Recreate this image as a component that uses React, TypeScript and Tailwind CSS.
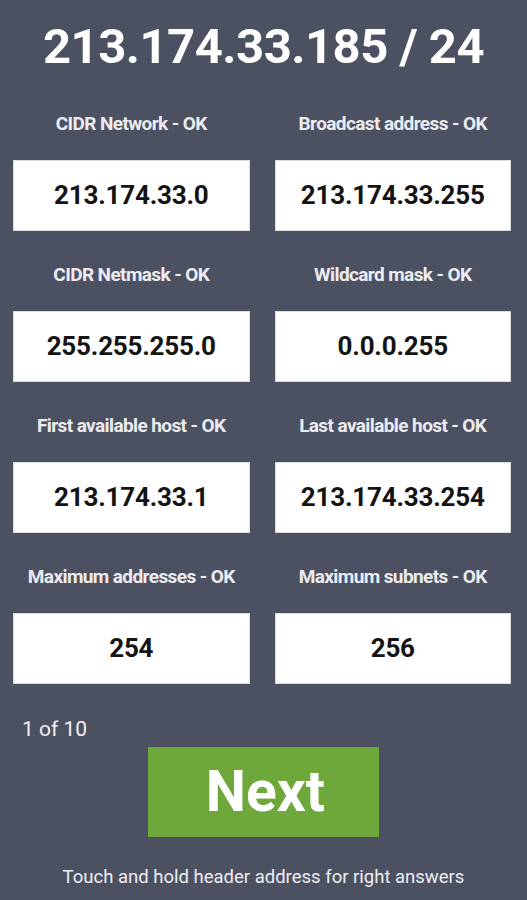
import React from "react";

const cells: [string, string][] = [
  ["CIDR Network - OK", "213.174.33.0"],
  ["Broadcast address - OK", "213.174.33.255"],
  ["CIDR Netmask - OK", "255.255.255.0"],
  ["Wildcard mask - OK", "0.0.0.255"],
  ["First available host - OK", "213.174.33.1"],
  ["Last available host - OK", "213.174.33.254"],
  ["Maximum addresses - OK", "254"],
  ["Maximum subnets - OK", "256"],
];

export default function App() {
  return (
    <div
      className="w-[527px] h-[900px] bg-[#4c5162] flex flex-col overflow-hidden"
      style={{ fontFamily: "Roboto, 'Liberation Sans', sans-serif" }}
    >
      <h1 className="mt-[19px] h-[56px] leading-[56px] text-center text-white text-[49px] font-bold tracking-[-0.5px]">
        213.174.33.185 / 24
      </h1>
      <div className="mt-[37px] pl-[13px] pr-[16px] grid grid-cols-2 gap-x-[25px] gap-y-[32px]">
        {cells.map(([label, value]) => (
          <div key={label} className="flex flex-col">
            <div className="h-[24px] leading-[24px] text-center text-[#ececf0] text-[19px] font-bold tracking-[-0.6px]">
              {label}
            </div>
            <div className="mt-[24px] h-[71px] bg-white border border-[#d9dbe0] flex items-center justify-center text-[#141414] text-[26px] font-bold tracking-[-0.2px]">
              {value}
            </div>
          </div>
        ))}
      </div>
      <div className="mt-[31px] pl-[22px] h-[28px] leading-[28px] text-[#f2f2f4] text-[21px]">
        1 of 10
      </div>
      <div className="mt-[4px] flex justify-center">
        <div className="w-[231px] h-[90px] bg-[#6ea83b] flex items-center justify-center text-white text-[57px] font-bold pl-[4px]">
          Next
        </div>
      </div>
      <div className="mt-[28px] h-[24px] leading-[24px] text-center text-[#eeeef2] text-[18.5px]">
        Touch and hold header address for right answers
      </div>
    </div>
  );
}
